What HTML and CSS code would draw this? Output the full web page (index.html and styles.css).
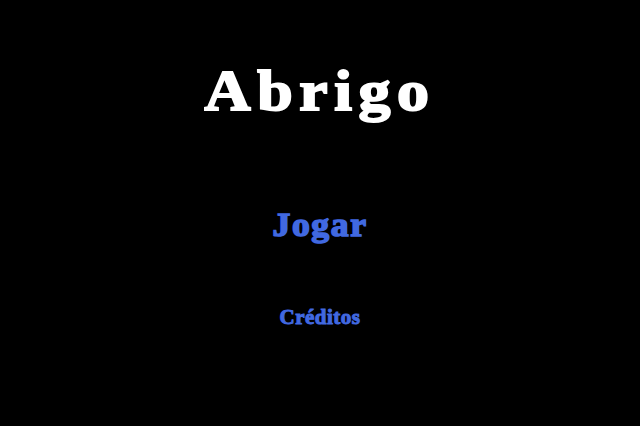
FILE: index.html
```html
<!DOCTYPE html>
<html lang="pt">
<head>
<meta charset="utf-8">
<title>Abrigo</title>
<link rel="stylesheet" href="styles.css">
</head>
<body>
<main class="menu">
  <h1 class="title">Abrigo</h1>
  <a class="item item-play" href="#">Jogar</a>
  <a class="item item-credits" href="#">Créditos</a>
</main>
</body>
</html>
```
FILE: styles.css
```css
html, body {
  margin: 0;
  padding: 0;
  background: #000;
  width: 640px;
  height: 426px;
  overflow: hidden;
}
.menu {
  display: flex;
  flex-direction: column;
  align-items: center;
  font-family: "Liberation Serif", "Times New Roman", serif;
  font-weight: bold;
}
.title {
  margin: 62px 0 0 0;
  color: #fff;
  font-size: 58px;
  letter-spacing: 6px;
  line-height: 1;
  font-weight: bold;
  -webkit-text-stroke: 2px #fff;
  transform: scaleX(1.1);
}
.item {
  color: #4169e1;
  text-decoration: none;
  line-height: 1;
}
.item-play {
  margin-top: 89px;
  font-size: 33px;
  letter-spacing: 1.5px;
  -webkit-text-stroke: 1.5px #4169e1;
  transform: scaleX(1.08);
}
.item-credits {
  margin-top: 65px;
  font-size: 21px;
  letter-spacing: 0.5px;
  -webkit-text-stroke: 1px #4169e1;
}
```
